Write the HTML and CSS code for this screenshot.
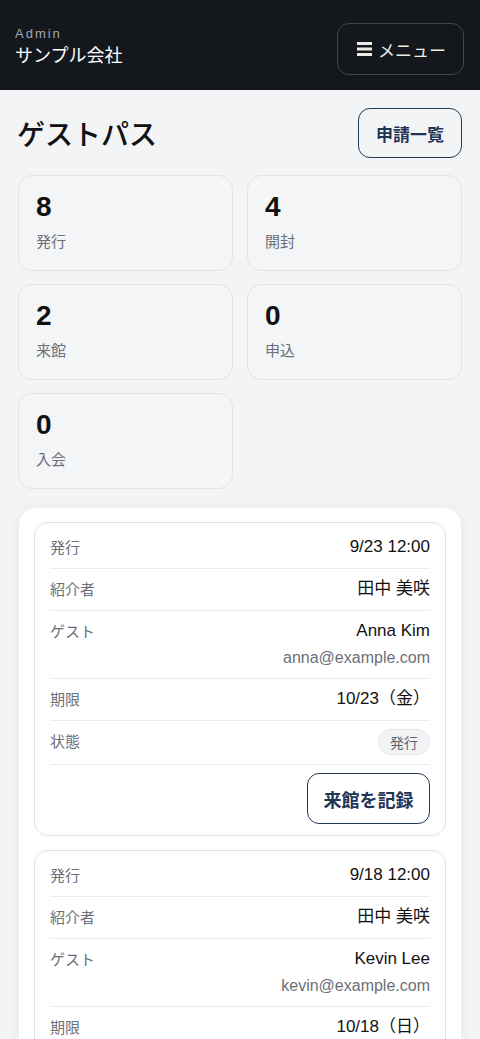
FILE: index.html
```html
<!DOCTYPE html>
<html lang="ja">
<head>
<meta charset="utf-8">
<title>ゲストパス</title>
<link rel="stylesheet" href="styles.css">
</head>
<body>
<header class="topbar">
  <div class="brand">
    <div class="brand-role">Admin</div>
    <div class="brand-name">サンプル会社</div>
  </div>
  <button class="menu-btn" type="button">
    <svg class="menu-icon" width="15" height="14" viewBox="0 0 15 14"><rect x="0" y="0" width="15" height="3" fill="currentColor"/><rect x="0" y="5.5" width="15" height="3" fill="currentColor"/><rect x="0" y="11" width="15" height="3" fill="currentColor"/></svg>
    <span>メニュー</span>
  </button>
</header>

<main class="page">
  <div class="title-row">
    <h1 class="page-title">ゲストパス</h1>
    <button class="outline-btn" type="button">申請一覧</button>
  </div>

  <section class="stats">
    <div class="stat"><div class="stat-num">8</div><div class="stat-label">発行</div></div>
    <div class="stat"><div class="stat-num">4</div><div class="stat-label">開封</div></div>
    <div class="stat"><div class="stat-num">2</div><div class="stat-label">来館</div></div>
    <div class="stat"><div class="stat-num">0</div><div class="stat-label">申込</div></div>
    <div class="stat"><div class="stat-num">0</div><div class="stat-label">入会</div></div>
  </section>

  <section class="panel">
    <article class="pass">
      <div class="row"><span class="label">発行</span><span class="value">9/23 12:00</span></div>
      <div class="row"><span class="label">紹介者</span><span class="value">田中 美咲</span></div>
      <div class="row"><span class="label">ゲスト</span><span class="value-stack"><span class="value">Anna Kim</span><span class="email">anna@example.com</span></span></div>
      <div class="row"><span class="label">期限</span><span class="value">10/23（金）</span></div>
      <div class="row"><span class="label">状態</span><span class="badge">発行</span></div>
      <div class="actions"><button class="outline-btn action-btn" type="button">来館を記録</button></div>
    </article>
    <article class="pass">
      <div class="row"><span class="label">発行</span><span class="value">9/18 12:00</span></div>
      <div class="row"><span class="label">紹介者</span><span class="value">田中 美咲</span></div>
      <div class="row"><span class="label">ゲスト</span><span class="value-stack"><span class="value">Kevin Lee</span><span class="email">kevin@example.com</span></span></div>
      <div class="row"><span class="label">期限</span><span class="value">10/18（日）</span></div>
      <div class="row"><span class="label">状態</span><span class="badge">発行</span></div>
      <div class="actions"><button class="outline-btn action-btn" type="button">来館を記録</button></div>
    </article>
  </section>
</main>
</body>
</html>
```

FILE: styles.css
```css
* { box-sizing: border-box; }

html, body {
  margin: 0;
  padding: 0;
}

body {
  background: #f3f4f6;
  font-family: "Liberation Sans", "Noto Sans CJK JP", sans-serif;
  color: #111827;
}

button {
  font-family: inherit;
  cursor: pointer;
}

.topbar {
  background: #14171c;
  height: 90px;
  padding: 23px 16px 15px 15px;
  display: flex;
  justify-content: space-between;
  align-items: flex-start;
}

.brand {
  padding-top: 3px;
}

.brand-role {
  font-size: 13px;
  line-height: 16px;
  letter-spacing: 2px;
  color: #a3a9b3;
}

.brand-name {
  font-family: "Noto Sans CJK JP", sans-serif;
  font-size: 18px;
  line-height: 24px;
  color: #ffffff;
}

.menu-btn {
  height: 52px;
  padding: 0 17px 0 19px;
  display: flex;
  align-items: center;
  gap: 6px;
  background: transparent;
  border: 1px solid #3f4654;
  border-radius: 12px;
  color: #eceae4;
  font-family: "Noto Sans CJK JP", sans-serif;
  font-size: 17px;
}

.menu-icon {
  display: block;
}

.page {
  padding: 18px 18px 40px 18px;
}

.title-row {
  display: flex;
  justify-content: space-between;
  align-items: center;
}

.page-title {
  margin: 0 0 0 -1px;
  font-family: "Noto Sans CJK JP", sans-serif;
  font-size: 28px;
  font-weight: 500;
  line-height: 40px;
  color: #111;
}

.outline-btn {
  background: #ffffff;
  border: 1.5px solid #23395a;
  border-radius: 12px;
  color: #1f3657;
  font-family: "Noto Sans CJK JP", sans-serif;
  font-weight: 700;
  font-size: 17px;
}

.title-row .outline-btn {
  height: 50px;
  width: 104px;
  background: transparent;
}

.stats {
  margin-top: 17px;
  display: grid;
  grid-template-columns: 1fr 1fr;
  column-gap: 14px;
  row-gap: 13px;
}

.stat {
  border: 1px solid #e1e3e6;
  border-radius: 14px;
  background: #f4f5f7;
  padding: 14px 18px 18px 17px;
}

.stat-num {
  font-size: 28px;
  font-weight: 700;
  line-height: 34px;
  color: #111;
}

.stat-label {
  margin-top: 6px;
  font-family: "Noto Sans CJK JP", sans-serif;
  font-size: 15px;
  line-height: 22px;
  color: #6b7079;
}

.panel {
  margin-top: 18px;
  background: #ffffff;
  border: 1px solid #eceef1;
  border-radius: 18px;
  box-shadow: 0 1px 8px rgba(0, 0, 0, 0.06);
  padding: 14px 15px;
  display: flex;
  flex-direction: column;
  gap: 14px;
}

.pass {
  border: 1px solid #dfe1e5;
  border-radius: 14px;
  padding: 4px 15px 11px 15px;
}

.row {
  display: flex;
  justify-content: space-between;
  align-items: flex-start;
  padding: 9px 0 10px 0;
  border-top: 1px solid #e9ebee;
}

.row:first-child {
  border-top: none;
}

.label {
  font-family: "Noto Sans CJK JP", sans-serif;
  font-size: 15px;
  line-height: 22px;
  color: #6b7079;
}

.value {
  font-size: 17px;
  line-height: 22px;
  color: #111;
}

.value-stack {
  display: flex;
  flex-direction: column;
  align-items: flex-end;
}

.email {
  margin-top: 6px;
  font-size: 16px;
  line-height: 20px;
  color: #6b7079;
}

.badge {
  height: 26px;
  margin: -1px 0 -1px 0;
  padding: 0 11px;
  border-radius: 13px;
  background: #f1f3f5;
  border: 1px solid #e3e6ea;
  font-family: "Noto Sans CJK JP", sans-serif;
  font-size: 14px;
  line-height: 24px;
  color: #5d636c;
}

.actions {
  display: flex;
  justify-content: flex-end;
  padding-top: 8px;
  border-top: 1px solid #e9ebee;
}

.action-btn {
  height: 51px;
  width: 123px;
  font-size: 18px;
}
```
